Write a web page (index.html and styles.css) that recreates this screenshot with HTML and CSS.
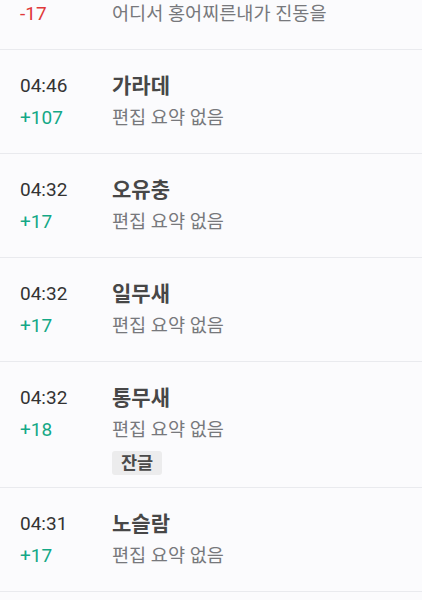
FILE: index.html
```html
<!DOCTYPE html>
<html lang="ko">
<head>
<meta charset="utf-8">
<title>기여 목록</title>
<link rel="stylesheet" href="styles.css">
</head>
<body>
<ul class="list">
  <li class="row">
    <span class="time">04:47</span>
    <span class="title">홍어</span>
    <span class="diff minus">-17</span>
    <span class="summary">어디서 홍어찌른내가 진동을</span>
  </li>
  <li class="row">
    <span class="time">04:46</span>
    <span class="title">가라데</span>
    <span class="diff plus">+107</span>
    <span class="summary">편집 요약 없음</span>
  </li>
  <li class="row">
    <span class="time">04:32</span>
    <span class="title">오유충</span>
    <span class="diff plus">+17</span>
    <span class="summary">편집 요약 없음</span>
  </li>
  <li class="row">
    <span class="time">04:32</span>
    <span class="title">일무새</span>
    <span class="diff plus">+17</span>
    <span class="summary">편집 요약 없음</span>
  </li>
  <li class="row row-tagged">
    <span class="time">04:32</span>
    <span class="title">통무새</span>
    <span class="diff plus">+18</span>
    <span class="summary">편집 요약 없음</span>
    <span class="tag">잔글</span>
  </li>
  <li class="row">
    <span class="time">04:31</span>
    <span class="title">노슬람</span>
    <span class="diff plus">+17</span>
    <span class="summary">편집 요약 없음</span>
  </li>
</ul>
</body>
</html>
```

FILE: styles.css
```css
html, body {
  margin: 0;
  padding: 0;
  background: #fbfbfd;
  overflow: hidden;
}

body {
  font-family: "Roboto", "Noto Sans CJK KR", sans-serif;
  color: #333;
}

.list {
  list-style: none;
  margin: -54px 0 0 0;
  padding: 0;
}

.row {
  display: grid;
  grid-template-columns: 92px 1fr;
  grid-template-rows: 28px 28px;
  row-gap: 4px;
  padding: 22px 20px 21px 20px;
  border-bottom: 1px solid #e9eaee;
}

.row-tagged {
  grid-template-rows: 28px 28px auto;
  padding-bottom: 12px;
}

.time {
  font-size: 19px;
  line-height: 28px;
  color: #333;
}

.title {
  font-size: 21px;
  line-height: 28px;
  font-weight: 700;
  color: #474747;
}

.diff {
  grid-column: 1;
  font-size: 19px;
  line-height: 28px;
}

.plus { color: #14a886; }
.minus { color: #e0393a; }

.summary {
  grid-column: 2;
  font-size: 18.6px;
  line-height: 28px;
  color: #77787c;
}

.tag {
  grid-column: 2;
  justify-self: start;
  margin-top: 3px;
  height: 24px;
  line-height: 24px;
  padding: 0 9px;
  border-radius: 3px;
  background: #ececed;
  color: #4a4a4a;
  font-size: 17.5px;
  font-weight: 700;
}
```
